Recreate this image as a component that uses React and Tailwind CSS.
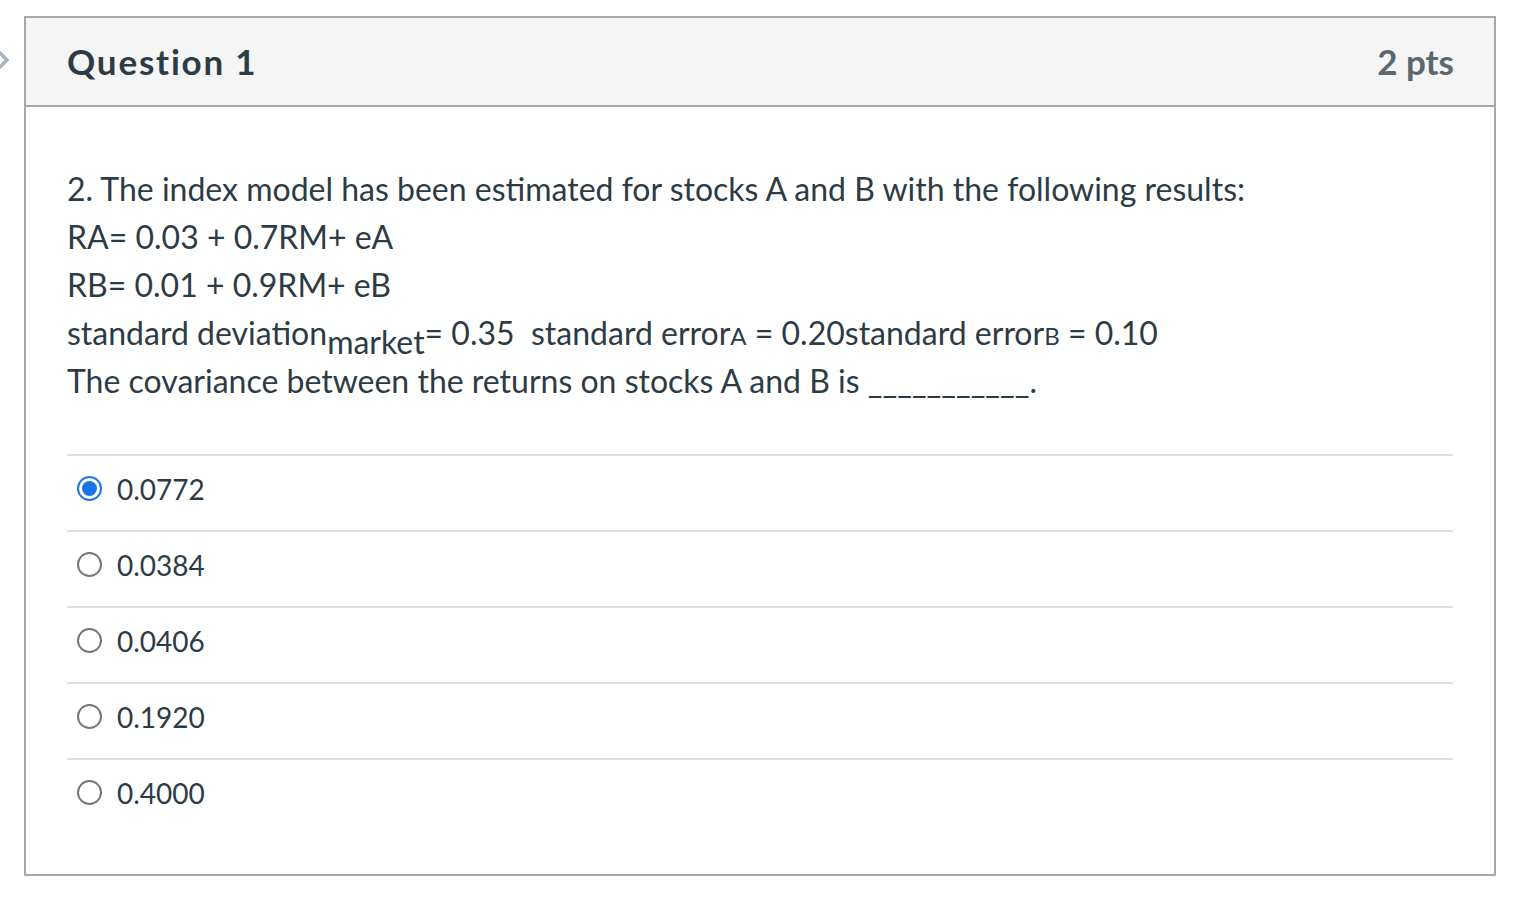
import React, { useState } from 'react'

const answers = ['0.0772', '0.0384', '0.0406', '0.1920', '0.4000']

function Radio({ checked }) {
  if (checked) {
    return (
      <span className="flex h-[25px] w-[25px] shrink-0 items-center justify-center rounded-full border-[2px] border-[#1a73e8] bg-white">
        <span className="h-[15px] w-[15px] rounded-full bg-[#1a73e8]" />
      </span>
    )
  }
  return <span className="h-[25px] w-[25px] shrink-0 rounded-full border-[2px] border-[#767676] bg-white" />
}

export default function App() {
  const [picked, setPicked] = useState(0)

  return (
    <div className="relative min-h-screen bg-white pt-4 pl-6 text-[#2d3b45]" style={{ fontFamily: 'Lato, "Noto Sans", sans-serif' }}>
      {/* question nav arrow, mostly hidden off the left edge */}
      <svg className="absolute left-0 top-[46px]" width="10" height="28" viewBox="0 0 10 28">
        <polyline points="-4,3 7,14 -4,25" fill="none" stroke="#a3b5c7" strokeWidth="3.5" />
      </svg>

      <div className="w-[1472px] border-[2px] border-[#a8a8a8]">
        <div className="flex h-[89px] items-center justify-between border-b-[2px] border-[#a8a8a8] bg-[#f5f5f5] pl-[41px] pr-[40px]">
          <h2 className="text-[35px] font-bold tracking-[1.8px]">Question 1</h2>
          <div className="text-[35px] font-bold text-[#5b6770]">2 pts</div>
        </div>

        <div className="px-[41px] pt-[58px] pb-[40px]">
          <div className="text-[32px] leading-[48px]">
            <p>2. The index model has been estimated for stocks A and B with the following results:</p>
            <p>RA= 0.03 + 0.7RM+ eA</p>
            <p>RB= 0.01 + 0.9RM+ eB</p>
            <p>
              standard deviation<span className="relative top-[9px] leading-none">market</span>= 0.35&nbsp; standard error
              <span className="text-[24px] leading-none">A</span> = 0.20standard error
              <span className="text-[24px] leading-none">B</span> = 0.10
            </p>
            <p>The covariance between the returns on stocks A and B is ___________.</p>
          </div>

          <div className="mt-[49px]">
            {answers.map((a, i) => (
              <label
                key={a}
                onClick={() => setPicked(i)}
                className="flex h-[76px] cursor-pointer items-center gap-[15px] border-t-[2px] border-[#dddddd] pb-[9px] pl-[10px]"
              >
                <Radio checked={picked === i} />
                <span className="text-[28px]">{a}</span>
              </label>
            ))}
          </div>
        </div>
      </div>
    </div>
  )
}
